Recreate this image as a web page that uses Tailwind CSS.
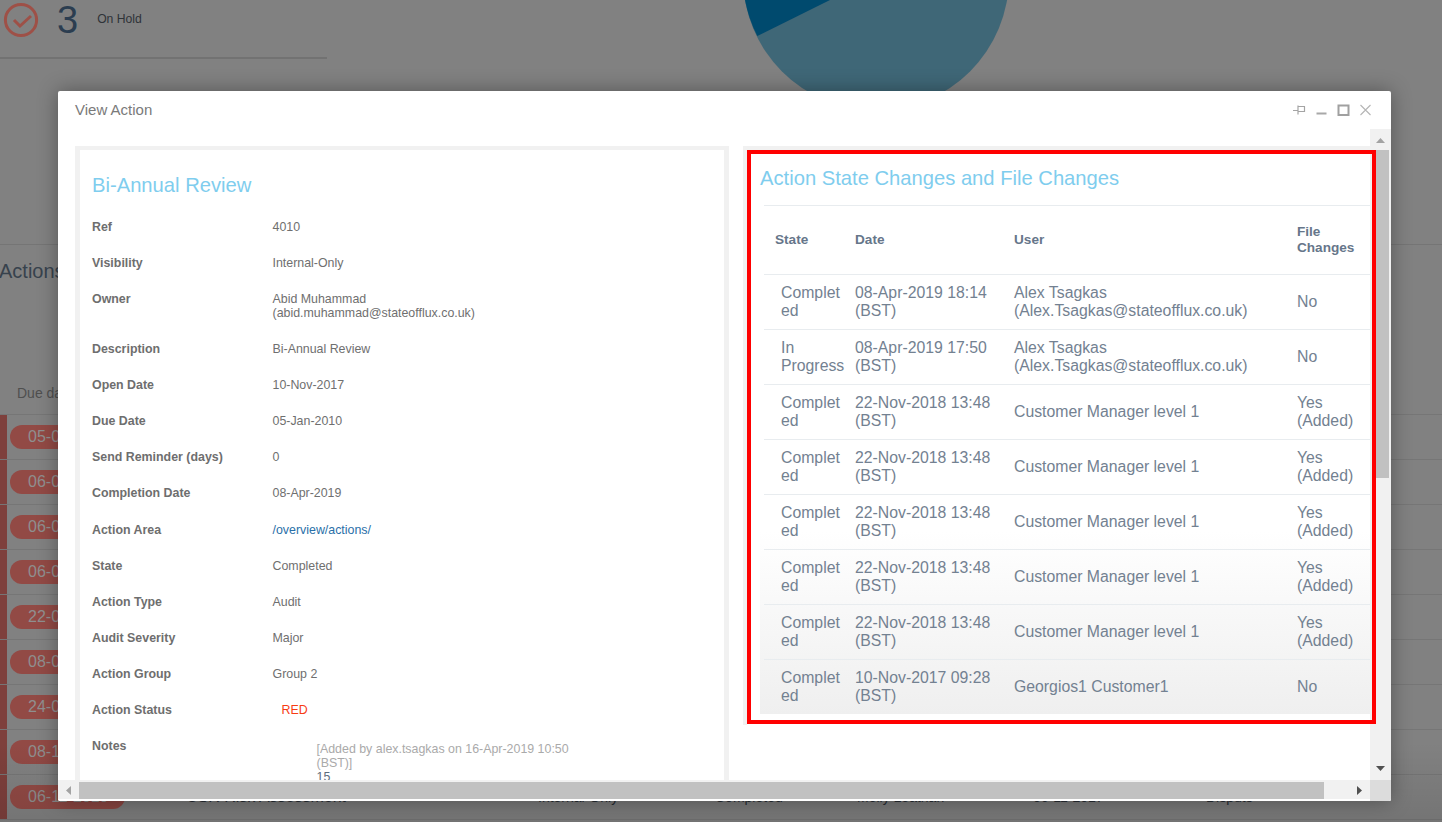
<!DOCTYPE html>
<html>
<head>
<meta charset="utf-8">
<script src="https://cdn.jsdelivr.net/npm/@tailwindcss/browser@4"></script>
</head>
<body class="font-['Liberation_Sans',Arial,sans-serif]">
<div class="relative w-[1442px] h-[822px] overflow-hidden bg-[#818181]">
  <!-- dimmed page -->
  <div class="flex flex-col text-[#2a3a4a]">
    <div class="flex items-start w-[327px] h-[59px] border-b-2 border-[#727272]">
      <svg class="w-[36px] h-[36px] ml-[3px] mt-[2px] shrink-0" viewBox="0 0 36 36" fill="none" stroke="#9e5047" stroke-width="3"><circle cx="18" cy="18" r="15.6"/><path d="M11 18l6 6 11-10"/></svg>
      <span class="ml-[18px] mt-[-2px] text-[38px] leading-[44px] text-[#2b3d50]">3</span>
      <span class="ml-[19px] mt-[12px] text-[12.2px] leading-[14px] text-[#2f3338]">On Hold</span>
    </div>
    <div class="mt-[185px] h-[1px] bg-[#757575]"></div>
    <div class="pt-[13px] h-[140px] text-xl leading-[26px] text-[#37424d] -ml-[1px]">Actions</div>
  </div>
  <div class="absolute left-0 top-[385px] pl-[17px] text-sm leading-4 text-[#4f4f4f]">Due date</div>
  <div class="absolute left-0 right-0 top-[414px] flex flex-col border-t border-[#767676]">
    <div class="flex items-center h-[45px] border-b border-[#767676]"><span class="w-[7px] h-full bg-[#7e403c]"></span><span class="ml-[3px] w-[115px] h-6 rounded-full bg-[#924a45] pl-[18px] text-base leading-6 text-[#8f8f8f]">05-0</span></div>
    <div class="flex items-center h-[45px] border-b border-[#767676]"><span class="w-[7px] h-full bg-[#7e403c]"></span><span class="ml-[3px] w-[115px] h-6 rounded-full bg-[#924a45] pl-[18px] text-base leading-6 text-[#8f8f8f]">06-0</span></div>
    <div class="flex items-center h-[45px] border-b border-[#767676]"><span class="w-[7px] h-full bg-[#7e403c]"></span><span class="ml-[3px] w-[115px] h-6 rounded-full bg-[#924a45] pl-[18px] text-base leading-6 text-[#8f8f8f]">06-0</span></div>
    <div class="flex items-center h-[45px] border-b border-[#767676]"><span class="w-[7px] h-full bg-[#7e403c]"></span><span class="ml-[3px] w-[115px] h-6 rounded-full bg-[#924a45] pl-[18px] text-base leading-6 text-[#8f8f8f]">06-0</span></div>
    <div class="flex items-center h-[45px] border-b border-[#767676]"><span class="w-[7px] h-full bg-[#7e403c]"></span><span class="ml-[3px] w-[115px] h-6 rounded-full bg-[#924a45] pl-[18px] text-base leading-6 text-[#8f8f8f]">22-0</span></div>
    <div class="flex items-center h-[45px] border-b border-[#767676]"><span class="w-[7px] h-full bg-[#7e403c]"></span><span class="ml-[3px] w-[115px] h-6 rounded-full bg-[#924a45] pl-[18px] text-base leading-6 text-[#8f8f8f]">08-0</span></div>
    <div class="flex items-center h-[45px] border-b border-[#767676]"><span class="w-[7px] h-full bg-[#7e403c]"></span><span class="ml-[3px] w-[115px] h-6 rounded-full bg-[#924a45] pl-[18px] text-base leading-6 text-[#8f8f8f]">24-0</span></div>
    <div class="flex items-center h-[45px] border-b border-[#767676]"><span class="w-[7px] h-full bg-[#7e403c]"></span><span class="ml-[3px] w-[115px] h-6 rounded-full bg-[#924a45] pl-[18px] text-base leading-6 text-[#8f8f8f]">08-1</span></div>
    <div class="flex items-center h-[45px] border-b border-[#767676]"><span class="w-[7px] h-full bg-[#7e403c]"></span><span class="ml-[3px] w-[115px] h-6 rounded-full bg-[#924a45] pl-[18px] text-base leading-6 text-[#8f8f8f]">06-11-2019</span></div>
  </div>
  <div class="absolute left-[186px] top-[789px] text-base leading-4 text-[#2a2f36]">CSR Risk Assessment</div>
  <div class="absolute left-[538px] top-[789px] text-sm leading-4 text-[#2a2f36]">Internal-Only</div>
  <div class="absolute left-[715px] top-[789px] text-sm leading-4 text-[#2a2f36]">Completed</div>
  <div class="absolute left-[857px] top-[789px] text-sm leading-4 text-[#2a2f36]">Molly Leathan</div>
  <div class="absolute left-[1033px] top-[789px] text-sm leading-4 text-[#2a2f36]">06-11-2017</div>
  <div class="absolute left-[1206px] top-[789px] text-sm leading-4 text-[#2a2f36]">Disputs</div>
  <!-- pie -->
  <svg class="absolute left-[700px] top-0" width="340" height="100" viewBox="0 0 340 100"><circle cx="176" cy="-22.6" r="133" fill="#3f6777"/><path d="M130 0L57.3 36A133 133 0 0 1 45 0Z" fill="#004a6e"/></svg>
  <div class="absolute inset-x-0 bottom-0 h-[80px] bg-gradient-to-b from-black/0 to-black/10"></div>

  <!-- modal -->
  <div class="absolute left-[58px] top-[91px] w-[1333px] h-[710px] bg-white rounded-[2px] shadow-[0_0_20px_rgba(0,0,0,0.35)] overflow-hidden flex flex-col">
    <div class="flex items-center justify-between h-[38px] shrink-0 pl-[17px] pr-[20px]">
      <span class="text-[15px] leading-[38px] text-[#7a7a7a]">View Action</span>
      <div class="flex items-center gap-[10px]">
        <svg width="13" height="12" viewBox="0 0 13 12" fill="none" stroke="#a4a4a4" stroke-width="1.2"><path d="M0 6.5h5M5 1.5v9M5 2.5h7M11.5 2.5v5H5"/></svg>
        <svg width="11" height="12" viewBox="0 0 11 12" fill="none" stroke="#a8a8a8" stroke-width="2"><path d="M0.5 9.5h10"/></svg>
        <svg width="13" height="13" viewBox="0 0 13 13" fill="none" stroke="#a0a0a0" stroke-width="2"><rect x="1.5" y="1.5" width="10" height="9.5"/></svg>
        <svg width="11" height="12" viewBox="0 0 11 12" fill="none" stroke="#b5b5b5" stroke-width="1.1"><path d="M0.5 1l10 10M10.5 1L0.5 11"/></svg>
      </div>
    </div>
    <div class="flex flex-1 min-h-0">
      <div class="flex-1 min-w-0 overflow-hidden flex items-start gap-[14px] pl-[17px] pt-[17px]">
        <!-- left panel -->
        <div class="w-[654px] shrink-0 border-x-[5px] border-t-[4px] border-[#f1f1f1] h-[640px] pl-[12px] pt-[24px] text-[12.4px] text-[#6f6f6f]">
          <h2 class="text-[20.2px] leading-[22px] text-[#7fcdee] mb-[24px]">Bi-Annual Review</h2>
          <div class="flex flex-col">
            <div class="flex min-h-[36px]"><span class="w-[180.5px] font-bold leading-[14px] text-[#6e6e6e]">Ref</span><span class="leading-[14px]">4010</span></div>
            <div class="flex min-h-[36px]"><span class="w-[180.5px] font-bold leading-[14px] text-[#6e6e6e]">Visibility</span><span class="leading-[14px]">Internal-Only</span></div>
            <div class="flex min-h-[50px]"><span class="w-[180.5px] font-bold leading-[14px] text-[#6e6e6e]">Owner</span><span class="leading-[14px]">Abid Muhammad<br>(abid.muhammad@stateofflux.co.uk)</span></div>
            <div class="flex min-h-[36px]"><span class="w-[180.5px] font-bold leading-[14px] text-[#6e6e6e]">Description</span><span class="leading-[14px]">Bi-Annual Review</span></div>
            <div class="flex min-h-[36px]"><span class="w-[180.5px] font-bold leading-[14px] text-[#6e6e6e]">Open Date</span><span class="leading-[14px]">10-Nov-2017</span></div>
            <div class="flex min-h-[36px]"><span class="w-[180.5px] font-bold leading-[14px] text-[#6e6e6e]">Due Date</span><span class="leading-[14px]">05-Jan-2010</span></div>
            <div class="flex min-h-[36px]"><span class="w-[180.5px] font-bold leading-[14px] text-[#6e6e6e]">Send Reminder (days)</span><span class="leading-[14px]">0</span></div>
            <div class="flex min-h-[37px]"><span class="w-[180.5px] font-bold leading-[14px] text-[#6e6e6e]">Completion Date</span><span class="leading-[14px]">08-Apr-2019</span></div>
            <div class="flex min-h-[36px]"><span class="w-[180.5px] font-bold leading-[14px] text-[#6e6e6e]">Action Area</span><span class="leading-[14px] text-[#2a6fa8]">/overview/actions/</span></div>
            <div class="flex min-h-[36px]"><span class="w-[180.5px] font-bold leading-[14px] text-[#6e6e6e]">State</span><span class="leading-[14px]">Completed</span></div>
            <div class="flex min-h-[36px]"><span class="w-[180.5px] font-bold leading-[14px] text-[#6e6e6e]">Action Type</span><span class="leading-[14px]">Audit</span></div>
            <div class="flex min-h-[36px]"><span class="w-[180.5px] font-bold leading-[14px] text-[#6e6e6e]">Audit Severity</span><span class="leading-[14px]">Major</span></div>
            <div class="flex min-h-[36px]"><span class="w-[180.5px] font-bold leading-[14px] text-[#6e6e6e]">Action Group</span><span class="leading-[14px]">Group 2</span></div>
            <div class="flex min-h-[36px]"><span class="w-[180.5px] font-bold leading-[14px] text-[#6e6e6e]">Action Status</span><span class="pl-[9px] leading-[14px] text-[#f73c14]">RED</span></div>
            <div class="flex"><span class="w-[180.5px] font-bold leading-[14px] text-[#6e6e6e]">Notes</span><span class="block pl-[44px] pt-[3px] w-[320px] leading-[14px] text-[#aaa]">[Added by alex.tsagkas on 16-Apr-2019 10:50 (BST)]<br><span class="text-[#5d6b7c]">15</span></span></div>
          </div>
        </div>
        <!-- right panel -->
        <div class="w-[640px] shrink-0 h-[579px] border-l-[4px] border-t-[4px] border-[#f1f1f1] pt-[14px]">
          <h2 class="text-[20.2px] leading-[28px] text-[#7fcdee] ml-[13px] mb-[13px]">Action State Changes and File Changes</h2>
          <div class="ml-[13px] w-[612px] pl-[4px] pr-[2px] bg-gradient-to-b from-white from-[64%] to-[#efefef]">
            <table class="w-[606px] table-fixed border-collapse text-[15.8px] text-[#738191]">
              <colgroup><col class="w-[91px]"><col class="w-[159px]"><col class="w-[283px]"><col class="w-[73px]"></colgroup>
              <thead>
                <tr class="h-[69px] border-y border-[#e8ecef] text-[13.6px] leading-4 text-left text-[#66768a]">
                  <th class="pl-[11px] font-bold">State</th><th class="font-bold">Date</th><th class="font-bold">User</th><th class="font-bold">File Changes</th>
                </tr>
              </thead>
              <tbody class="leading-[18px]">
                <tr class="h-[55px] border-b border-[#e8ecef]"><td class="pl-[17px] pr-[12px] break-all">Completed</td><td>08-Apr-2019 18:14 (BST)</td><td>Alex Tsagkas (Alex.Tsagkas@stateofflux.co.uk)</td><td>No</td></tr>
                <tr class="h-[55px] border-b border-[#e8ecef]"><td class="pl-[17px]">In Progress</td><td>08-Apr-2019 17:50 (BST)</td><td>Alex Tsagkas (Alex.Tsagkas@stateofflux.co.uk)</td><td>No</td></tr>
                <tr class="h-[55px] border-b border-[#e8ecef]"><td class="pl-[17px] pr-[12px] break-all">Completed</td><td>22-Nov-2018 13:48 (BST)</td><td>Customer Manager level 1</td><td>Yes (Added)</td></tr>
                <tr class="h-[55px] border-b border-[#e8ecef]"><td class="pl-[17px] pr-[12px] break-all">Completed</td><td>22-Nov-2018 13:48 (BST)</td><td>Customer Manager level 1</td><td>Yes (Added)</td></tr>
                <tr class="h-[55px] border-b border-[#e8ecef]"><td class="pl-[17px] pr-[12px] break-all">Completed</td><td>22-Nov-2018 13:48 (BST)</td><td>Customer Manager level 1</td><td>Yes (Added)</td></tr>
                <tr class="h-[55px] border-b border-[#e8ecef]"><td class="pl-[17px] pr-[12px] break-all">Completed</td><td>22-Nov-2018 13:48 (BST)</td><td>Customer Manager level 1</td><td>Yes (Added)</td></tr>
                <tr class="h-[55px] border-b border-[#e8ecef]"><td class="pl-[17px] pr-[12px] break-all">Completed</td><td>22-Nov-2018 13:48 (BST)</td><td>Customer Manager level 1</td><td>Yes (Added)</td></tr>
                <tr class="h-[54px]"><td class="pl-[17px] pr-[12px] break-all">Completed</td><td>10-Nov-2017 09:28 (BST)</td><td>Georgios1 Customer1</td><td>No</td></tr>
              </tbody>
            </table>
          </div>
        </div>
      </div>
      <!-- vertical scrollbar -->
      <div class="w-[21px] shrink-0 bg-[#f1f1f1] flex flex-col items-center">
        <svg class="mt-[9px]" width="9" height="5" viewBox="0 0 9 5"><path d="M4.5 0L9 5H0z" fill="#a3a3a3"/></svg>
        <div class="mt-[7px] w-[14px] ml-[3px] h-[328px] bg-[#c1c1c1]"></div>
        <svg class="mt-auto mb-[9px]" width="9" height="5" viewBox="0 0 9 5"><path d="M0 0h9L4.5 5z" fill="#505050"/></svg>
      </div>
    </div>
    <!-- horizontal scrollbar -->
    <div class="flex h-[21px] shrink-0 bg-white">
      <div class="flex flex-1 items-end h-[19px] bg-[#f1f1f1]">
        <svg class="ml-[8px] mb-[4px]" width="5" height="9" viewBox="0 0 5 9"><path d="M5 0v9L0 4.5z" fill="#a3a3a3"/></svg>
        <div class="ml-[8px] w-[1245px] h-[17px] bg-[#c1c1c1]"></div>
        <svg class="ml-[33px] mb-[4px]" width="5" height="9" viewBox="0 0 5 9"><path d="M0 0v9l5-4.5z" fill="#505050"/></svg>
      </div>
      <div class="w-[21px] h-full bg-[#dcdcdc]"></div>
    </div>
    <!-- red annotation -->
    <div class="absolute left-[689px] top-[59px] w-[629px] h-[574px] border-[4px] border-[#ff0000] pointer-events-none"></div>
  </div>
</div>
</body>
</html>
